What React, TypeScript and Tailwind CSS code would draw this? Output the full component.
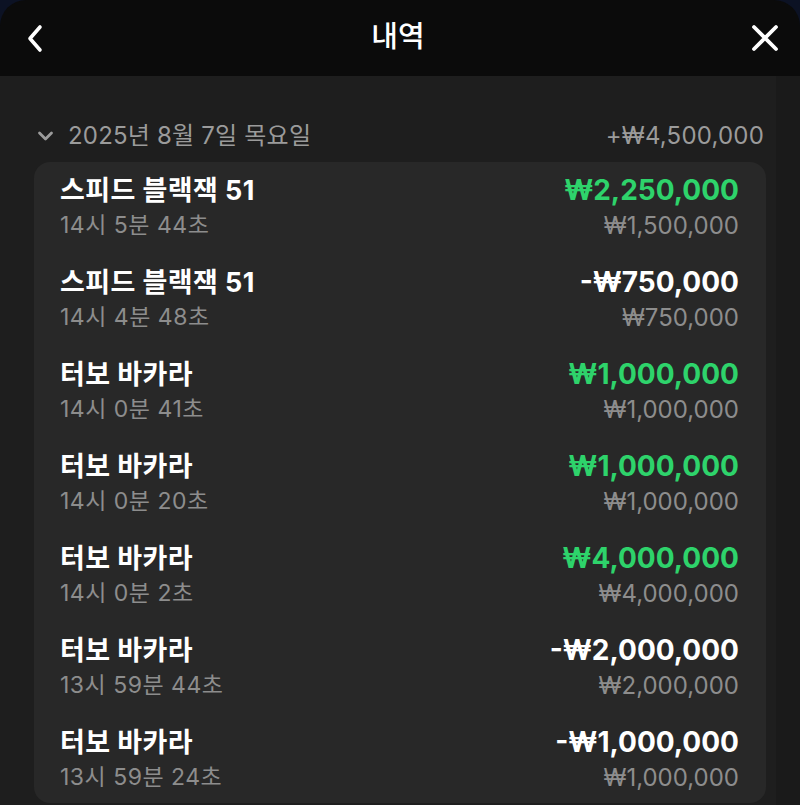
import React from "react";

type Row = {
  name: string;
  time: string;
  result: string;
  bet: string;
  win: boolean;
};

const rows: Row[] = [
  { name: "스피드 블랙잭 51", time: "14시 5분 44초", result: "₩2,250,000", bet: "₩1,500,000", win: true },
  { name: "스피드 블랙잭 51", time: "14시 4분 48초", result: "-₩750,000", bet: "₩750,000", win: false },
  { name: "터보 바카라", time: "14시 0분 41초", result: "₩1,000,000", bet: "₩1,000,000", win: true },
  { name: "터보 바카라", time: "14시 0분 20초", result: "₩1,000,000", bet: "₩1,000,000", win: true },
  { name: "터보 바카라", time: "14시 0분 2초", result: "₩4,000,000", bet: "₩4,000,000", win: true },
  { name: "터보 바카라", time: "13시 59분 44초", result: "-₩2,000,000", bet: "₩2,000,000", win: false },
  { name: "터보 바카라", time: "13시 59분 24초", result: "-₩1,000,000", bet: "₩1,000,000", win: false },
];

const font = { fontFamily: '"Inter", "Noto Sans CJK KR", sans-serif' };

const App = () => {
  return (
    <div className="w-[800px] h-[805px] bg-[#0c1224] overflow-hidden" style={font}>
      <div className="h-full rounded-t-[26px] overflow-hidden flex flex-col bg-[#0b0b0b]">
        {/* 헤더 */}
        <div className="h-[76px] shrink-0 flex items-center justify-between pl-[24px] pr-[20px]">
          <svg width="22" height="30" viewBox="0 0 22 30" fill="none">
            <path d="M16 4 L6 15.5 L16 27" stroke="white" strokeWidth="3.6" strokeLinecap="round" strokeLinejoin="round" />
          </svg>
          <h1 className="text-[29px] font-medium text-white leading-none -mt-[4px]">내역</h1>
          <svg width="30" height="30" viewBox="0 0 30 30" fill="none">
            <path d="M4 4 L26 26 M26 4 L4 26" stroke="white" strokeWidth="3.8" strokeLinecap="round" />
          </svg>
        </div>

        {/* 본문 */}
        <div className="flex-1 flex bg-[#1e1e1e]">
          <div className="w-[776px] pt-[43px]">
            {/* 날짜 */}
            <div className="h-[34px] flex items-center justify-between pl-[37px] pr-[12px] text-[24px] tracking-[0.2px] text-[#9b9b9b]">
              <div className="flex items-center gap-[14px]">
                <svg width="17" height="12" viewBox="0 0 17 12" fill="none">
                  <path d="M2.5 3 L8.5 9 L14.5 3" stroke="#9b9b9b" strokeWidth="2.8" strokeLinecap="round" strokeLinejoin="round" />
                </svg>
                <span>2025년 8월 7일 목요일</span>
              </div>
              <span>+₩4,500,000</span>
            </div>

            {/* 카드 */}
            <div className="mt-[9px] ml-[34px] w-[732px] rounded-[16px] bg-[#282828] pt-[11px] pb-[8px] pl-[26px] pr-[27px] flex flex-col gap-[22px]">
              {rows.map((r, i) => (
                <div key={i} className="flex justify-between">
                  <div className="flex flex-col">
                    <span className="h-[35px] leading-[35px] text-[27px] tracking-[0.4px] font-bold text-white">{r.name}</span>
                    <span className="h-[35px] leading-[35px] text-[23px] tracking-[0.5px] text-[#8d8d8d]">{r.time}</span>
                  </div>
                  <div className="flex flex-col items-end">
                    <span
                      className={
                        r.win
                          ? "h-[35px] leading-[35px] text-[28px] font-bold text-[#2ed36b]"
                          : "h-[35px] leading-[35px] text-[28px] font-bold text-white"
                      }
                    >
                      {r.result}
                    </span>
                    <span className="h-[35px] leading-[35px] text-[24px] text-[#8d8d8d]">{r.bet}</span>
                  </div>
                </div>
              ))}
            </div>
          </div>
          <div className="flex-1 bg-[#1a1a1a]" />
        </div>
      </div>
    </div>
  );
};

export default App;
